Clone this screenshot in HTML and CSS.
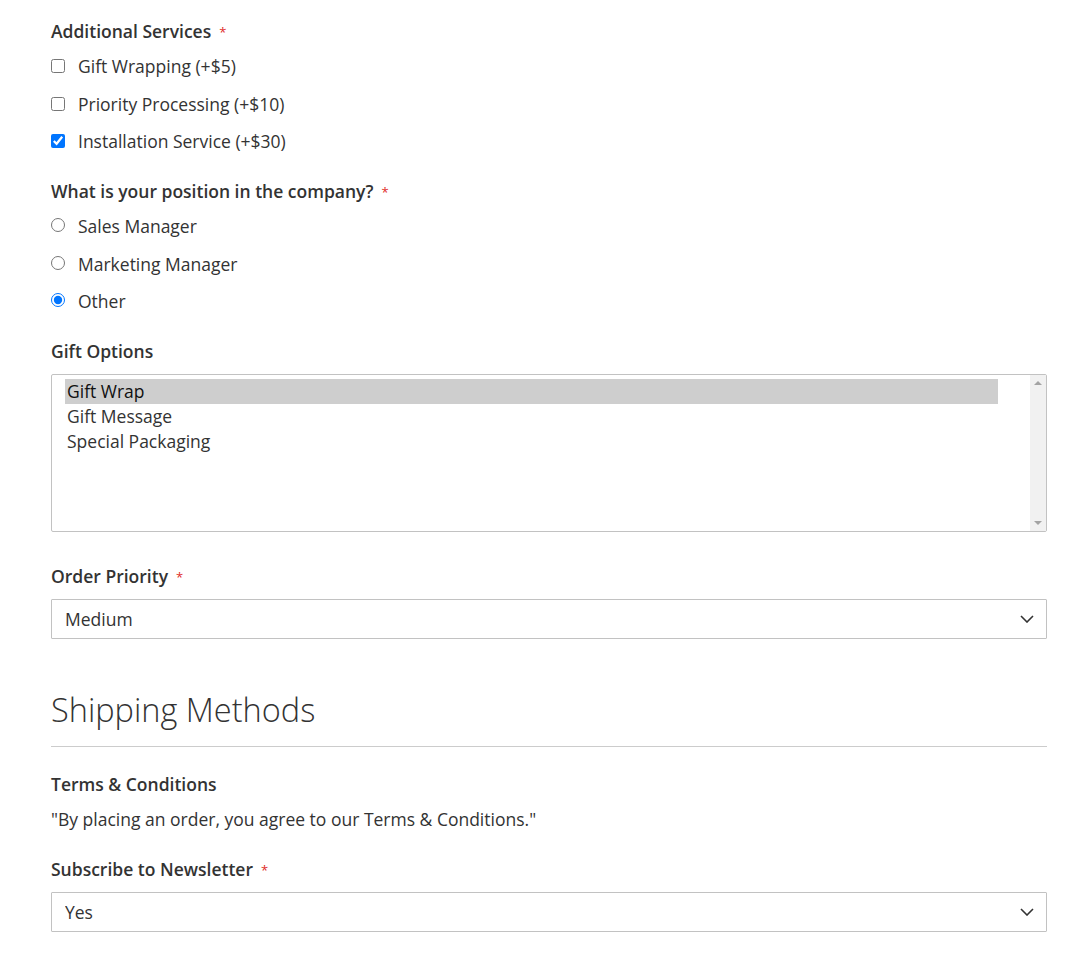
FILE: index.html
```html
<!DOCTYPE html>
<html lang="en">
<head>
<meta charset="utf-8">
<title>Checkout form</title>
<link rel="stylesheet" href="styles.css">
</head>
<body>
<form class="form">
  <div class="field">
    <div class="label required">Additional Services</div>
    <div class="choices">
      <label class="choice"><input type="checkbox"><span>Gift Wrapping (+$5)</span></label>
      <label class="choice"><input type="checkbox"><span>Priority Processing (+$10)</span></label>
      <label class="choice"><input type="checkbox" checked><span>Installation Service (+$30)</span></label>
    </div>
  </div>

  <div class="field field-radios">
    <div class="label required">What is your position in the company?</div>
    <div class="choices">
      <label class="choice"><input type="radio" name="pos"><span>Sales Manager</span></label>
      <label class="choice"><input type="radio" name="pos"><span>Marketing Manager</span></label>
      <label class="choice"><input type="radio" name="pos" checked><span>Other</span></label>
    </div>
  </div>

  <div class="field field-list">
    <div class="label">Gift Options</div>
    <div class="listbox-wrap">
      <select class="listbox" multiple size="6">
        <option selected>Gift Wrap</option>
        <option>Gift Message</option>
        <option>Special Packaging</option>
      </select>
      <div class="fake-scrollbar" aria-hidden="true">
        <span class="arrow arrow-up"></span>
        <span class="arrow arrow-down"></span>
      </div>
    </div>
  </div>

  <div class="field field-priority">
    <div class="label required">Order Priority</div>
    <div class="select-wrap">
      <select class="dropdown">
        <option>Low</option>
        <option selected>Medium</option>
        <option>High</option>
      </select>
      <svg class="chevron" width="14" height="8" viewBox="0 0 14 8"><path d="M1 1l6 6 6-6" fill="none" stroke="#333" stroke-width="1.6"/></svg>
    </div>
  </div>

  <h2 class="step-title">Shipping Methods</h2>

  <div class="field field-terms">
    <div class="label">Terms &amp; Conditions</div>
    <p class="terms">"By placing an order, you agree to our Terms &amp; Conditions."</p>
  </div>

  <div class="field">
    <div class="label required">Subscribe to Newsletter</div>
    <div class="select-wrap">
      <select class="dropdown">
        <option selected>Yes</option>
        <option>No</option>
      </select>
      <svg class="chevron" width="14" height="8" viewBox="0 0 14 8"><path d="M1 1l6 6 6-6" fill="none" stroke="#333" stroke-width="1.6"/></svg>
    </div>
  </div>
</form>
</body>
</html>
```

FILE: styles.css
```css
html, body {
  margin: 0;
  padding: 0;
  background: #fff;
}
body {
  font-family: "Open Sans", "Liberation Sans", sans-serif;
  font-size: 17.5px;
  color: #333;
}
.form {
  display: flex;
  flex-direction: column;
  padding: 19px 26px 0 51px;
}
.field {
  display: flex;
  flex-direction: column;
  margin-bottom: 26px;
}
.label {
  font-weight: 600;
  font-size: 17.5px;
  line-height: 24px;
  margin-bottom: 11px;
}
.label.required::after {
  content: "*";
  color: #e02b27;
  font-size: 13px;
  font-weight: 400;
  margin-left: 8px;
  vertical-align: top;
  position: relative;
  top: 1px;
}
.choices {
  display: flex;
  flex-direction: column;
  gap: 13.5px;
}
.choice {
  display: flex;
  align-items: center;
  line-height: 24px;
  font-size: 17.5px;
  color: #333;
}
.choice input {
  margin: 0 13px 0 0;
  width: 14px;
  height: 14px;
  flex: none;
}
.choice input[type="radio"] {
  position: relative;
  top: -1px;
}
.field-radios {
  margin-bottom: 26px;
}
.listbox-wrap {
  position: relative;
}
.listbox {
  display: block;
  width: 100%;
  height: 158px;
  box-sizing: border-box;
  border: 1px solid #c2c2c2;
  padding: 4px 48px 4px 13px;
  font-family: "Open Sans", "Liberation Sans", sans-serif;
  font-size: 17.5px;
  color: #333;
  outline: none;
  overflow: hidden;
}
.listbox option {
  padding: 0 2px 1px;
  line-height: 23px;
}
.fake-scrollbar {
  position: absolute;
  top: 1px;
  bottom: 1px;
  right: 1px;
  width: 16px;
  background: #f1f1f1;
}
.arrow {
  position: absolute;
  left: 4px;
  width: 0;
  height: 0;
  border-left: 4px solid transparent;
  border-right: 4px solid transparent;
}
.arrow-up {
  top: 6px;
  border-bottom: 4px solid #a3a3a3;
}
.arrow-down {
  bottom: 6px;
  border-top: 4px solid #a3a3a3;
}
.field-list {
  margin-bottom: 32px;
}
.select-wrap {
  position: relative;
}
.dropdown {
  display: block;
  width: 100%;
  height: 40px;
  box-sizing: border-box;
  border: 1px solid #c2c2c2;
  border-radius: 1px;
  background: #fff;
  padding: 0 40px 0 13px;
  font-family: "Open Sans", "Liberation Sans", sans-serif;
  font-size: 17.5px;
  color: #333;
  appearance: none;
  -webkit-appearance: none;
  outline: none;
}
.chevron {
  position: absolute;
  right: 13px;
  top: 16px;
  pointer-events: none;
}
.field-priority {
  margin-bottom: 28px;
}
.step-title {
  font-weight: 300;
  font-size: 32.5px;
  line-height: 40px;
  margin: 23px 0 25px;
  padding-bottom: 16px;
  border-bottom: 1px solid #ccc;
  color: #333;
}
.terms {
  margin: 0;
  line-height: 24px;
  font-size: 17.5px;
}
```
